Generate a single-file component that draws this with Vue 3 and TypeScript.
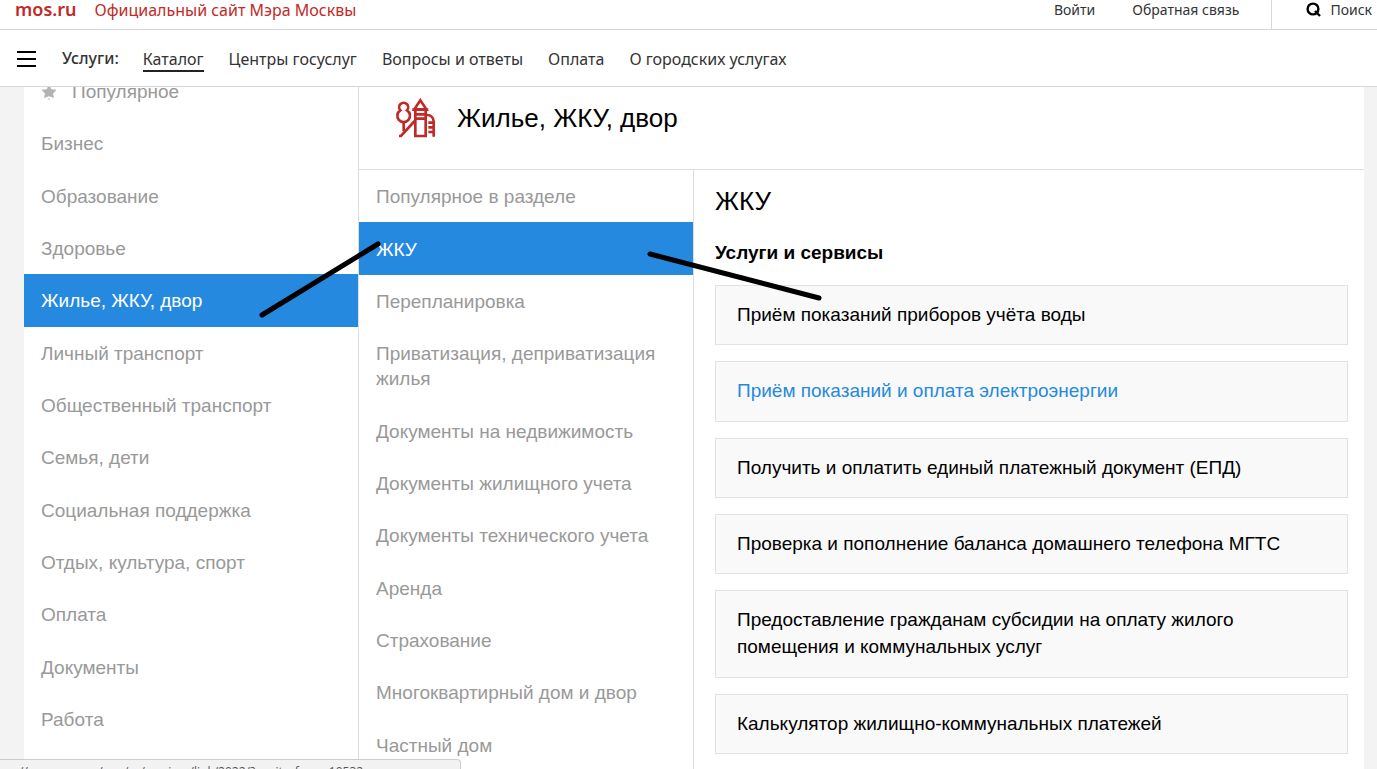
<script setup lang="ts">
import { ref } from 'vue'

const navLinks: string[] = ['Каталог', 'Центры госуслуг', 'Вопросы и ответы', 'Оплата', 'О городских услугах']
const categories: string[] = [
  'Популярное', 'Бизнес', 'Образование', 'Здоровье', 'Жилье, ЖКУ, двор', 'Личный транспорт',
  'Общественный транспорт', 'Семья, дети', 'Социальная поддержка', 'Отдых, культура, спорт',
  'Оплата', 'Документы', 'Работа',
]
const topics: string[] = [
  'Популярное в разделе', 'ЖКУ', 'Перепланировка', 'Приватизация, деприватизация жилья',
  'Документы на недвижимость', 'Документы жилищного учета', 'Документы технического учета',
  'Аренда', 'Страхование', 'Многоквартирный дом и двор', 'Частный дом',
]
const services: string[] = [
  'Приём показаний приборов учёта воды',
  'Приём показаний и оплата электроэнергии',
  'Получить и оплатить единый платежный документ (ЕПД)',
  'Проверка и пополнение баланса домашнего телефона МГТС',
  'Предоставление гражданам субсидии на оплату жилого помещения и коммунальных услуг',
  'Калькулятор жилищно-коммунальных платежей',
]
const activeNav = ref('Каталог')
const activeCategory = ref('Жилье, ЖКУ, двор')
const activeTopic = ref('ЖКУ')
const activeService = ref('Приём показаний и оплата электроэнергии')
</script>

<template>
  <div class="page">
    <header class="header">
      <div class="topbar">
        <a class="logo" href="#">mos.ru</a>
        <a class="slogan" href="#">Официальный сайт Мэра Москвы</a>
        <a class="toplink login" href="#">Войти</a>
        <a class="toplink feedback" href="#">Обратная связь</a>
        <button class="toplink search" type="button">
          <svg class="lens" viewBox="0 0 15 15" aria-hidden="true">
            <circle cx="7" cy="7" r="5.4" />
            <path d="M9 9L14 14" />
          </svg>
          Поиск
        </button>
      </div>
      <div class="mainbar">
        <button class="burger" type="button" aria-label="Меню"><i /><i /><i /></button>
        <span class="nav-title">Услуги:</span>
        <nav class="nav">
          <a
            v-for="link in navLinks"
            :key="link"
            href="#"
            :class="{ active: link === activeNav }"
            @click.prevent="activeNav = link"
          >{{ link }}</a>
        </nav>
      </div>
    </header>

    <main class="catalog">
      <nav class="menu categories">
        <a
          v-for="(item, i) in categories"
          :key="item"
          href="#"
          :class="{ active: item === activeCategory }"
          @click.prevent="activeCategory = item"
        >
          <svg v-if="i === 0" class="star" viewBox="0 0 16 16" aria-hidden="true">
            <path d="M8 0.5L10.3 5.2L15.5 5.8L12 9.4L13 14L8 12.2L3 14L4 9.4L0.5 5.8L5.7 5.2Z" />
            <circle cx="8" cy="15" r="0.8" />
          </svg>
          <span>{{ item }}</span>
        </a>
      </nav>

      <section class="section">
        <div class="section-head">
          <svg class="section-icon" viewBox="45 43 123 123" aria-hidden="true">
            <path d="M61 80A13.5 13.5 0 1 1 81 80A19 19 0 1 1 61 80Z" />
            <path d="M71 113V142M57 157H63L104 112" />
            <path d="M121 50L103 77H139Z M97 78H145" />
            <path d="M106 78V157H137V78M106 92H137M106 105H137" />
            <path d="M137 94H142A19 19 0 0 1 161 113V159M145 117H161M145 131H161M145 145H161" />
          </svg>
          <h1>Жилье, ЖКУ, двор</h1>
        </div>
        <div class="section-body">
          <nav class="menu topics">
            <a
              v-for="item in topics"
              :key="item"
              href="#"
              :class="{ active: item === activeTopic }"
              @click.prevent="activeTopic = item"
            ><span>{{ item }}</span></a>
          </nav>
          <div class="content">
            <h2>ЖКУ</h2>
            <h3>Услуги и сервисы</h3>
            <div class="cards">
              <a
                v-for="item in services"
                :key="item"
                href="#"
                :class="{ active: item === activeService }"
                @click.prevent="activeService = item"
              >{{ item }}</a>
            </div>
          </div>
        </div>
      </section>
    </main>

    <svg class="marks" aria-hidden="true">
      <path d="M262 315L378 244M650 254L819 298" />
    </svg>
    <div class="status">//www.mos.ru/pgu/ru/services/link/2022/?onsite_from=10532</div>
  </div>
</template>

<style>
body {
  margin: 0;
}
</style>

<style scoped>
.page {
  position: relative;
  display: flex;
  flex-direction: column;
  height: 100vh;
  overflow: hidden;
  background: #f3f3f3;
  font-family: "Liberation Sans", Arial, sans-serif;
  font-size: 19px;
  color: #000;
}
.page * {
  box-sizing: border-box;
}
a {
  color: inherit;
  text-decoration: none;
}
button {
  padding: 0;
  border: 0;
  background: none;
  cursor: pointer;
}
h1, h2, h3 {
  margin: 0;
  font-weight: 400;
}

.header {
  position: relative;
  z-index: 1;
  flex: none;
  background: #fff;
  font-family: "Noto Sans", "Open Sans", sans-serif;
  font-size: 16px;
  color: #333;
}
.topbar {
  display: flex;
  height: 30px;
  padding: 0 5px 0 15px;
  border-bottom: 1px solid #d5d8db;
  line-height: 20px;
}
.logo {
  margin-right: 18px;
  font-size: 18px;
  font-weight: 600;
  line-height: 18px;
  color: #c12a27;
}
.slogan {
  margin-right: auto;
  color: #c12a27;
}
.toplink {
  font-family: inherit;
  font-size: 14px;
  line-height: 20px;
  color: #333;
}
.login {
  margin-right: 37px;
}
.feedback {
  margin-right: 32px;
}
.search {
  display: flex;
  align-items: flex-start;
  gap: 9px;
  padding-left: 34px;
  border-left: 1px solid #d5d8db;
}
.lens {
  width: 15px;
  height: 15px;
  margin-top: 2px;
  fill: none;
  stroke: #000;
  stroke-width: 2.4;
}
.mainbar {
  display: flex;
  align-items: center;
  height: 57px;
  padding: 0 17px;
  border-bottom: 1px solid #d5d8db;
}
.burger {
  display: flex;
  flex-direction: column;
  gap: 5px;
  width: 19px;
  margin: 2px 26px 0 0;
}
.burger i {
  height: 2px;
  background: #000;
}
.nav-title {
  margin-right: 24px;
  font-weight: 500;
}
.nav {
  display: flex;
  gap: 25px;
  margin-top: 4px;
  line-height: 22px;
}
.nav a {
  border-bottom: 2px solid transparent;
}
.nav a.active {
  border-bottom-color: #222;
}

.catalog {
  display: flex;
  flex: 1;
  align-items: stretch;
  min-height: 0;
  margin: -22px 13px 0 24px;
  background: #fff;
}
.menu {
  display: flex;
  flex-direction: column;
  align-self: flex-start;
  line-height: 25px;
  color: #999;
}
.menu a {
  display: flex;
  flex: 1 0 auto;
  align-items: center;
  padding: 14px 17px 13px;
}
.menu a.active {
  background: #2589df;
  color: #fff;
}
.categories {
  flex: 0 0 calc(25% - 1px);
  min-height: 680px;
}
.star {
  width: 16px;
  height: 16px;
  margin-right: 15px;
  fill: #b3b3b3;
}
.section {
  display: flex;
  flex: 1;
  flex-direction: column;
  border-left: 1px solid #ddd;
}
.section-head {
  display: flex;
  flex: none;
  align-items: center;
  gap: 21px;
  height: 105px;
  padding: 2px 36px 0;
  border-bottom: 1px solid #ddd;
}
.section-icon {
  width: 41px;
  height: 41px;
  fill: none;
  stroke: #c12a27;
  stroke-width: 8;
}
h1, h2 {
  font-size: 26px;
  line-height: 32px;
}
.section-body {
  display: flex;
  flex: 1;
}
.topics {
  flex: 0 0 calc(100% / 3 - 1px);
  min-height: 601px;
}
.content {
  flex: 1;
  padding: 15px 16px 14px 21px;
  border-left: 1px solid #ddd;
}
h3 {
  margin: 22px 0 19px;
  font-size: 19px;
  font-weight: 700;
  line-height: 27px;
}
.cards {
  display: flex;
  flex-direction: column;
  gap: 16px;
  min-height: 469px;
  line-height: 27px;
}
.cards a {
  flex: 1 0 auto;
  padding: 15px 40px 16px 21px;
  border: 1px solid #e2e2e2;
  background: #f9f9f9;
}
.cards a.active {
  color: #2589df;
}

.marks {
  position: absolute;
  inset: 0;
  z-index: 2;
  width: 100%;
  height: 100%;
  fill: none;
  stroke: #000;
  stroke-width: 5;
  stroke-linecap: round;
  pointer-events: none;
}
.status {
  position: absolute;
  bottom: 0;
  left: 0;
  z-index: 3;
  width: 461px;
  height: 10px;
  padding: 4px 19px 0;
  overflow: hidden;
  border: 1px solid #ccc;
  border-width: 1px 1px 0 0;
  border-top-right-radius: 4px;
  background: #f2f2f2;
  font-family: "Open Sans", sans-serif;
  font-size: 12px;
  line-height: 16px;
  color: #555;
  white-space: nowrap;
}
</style>
